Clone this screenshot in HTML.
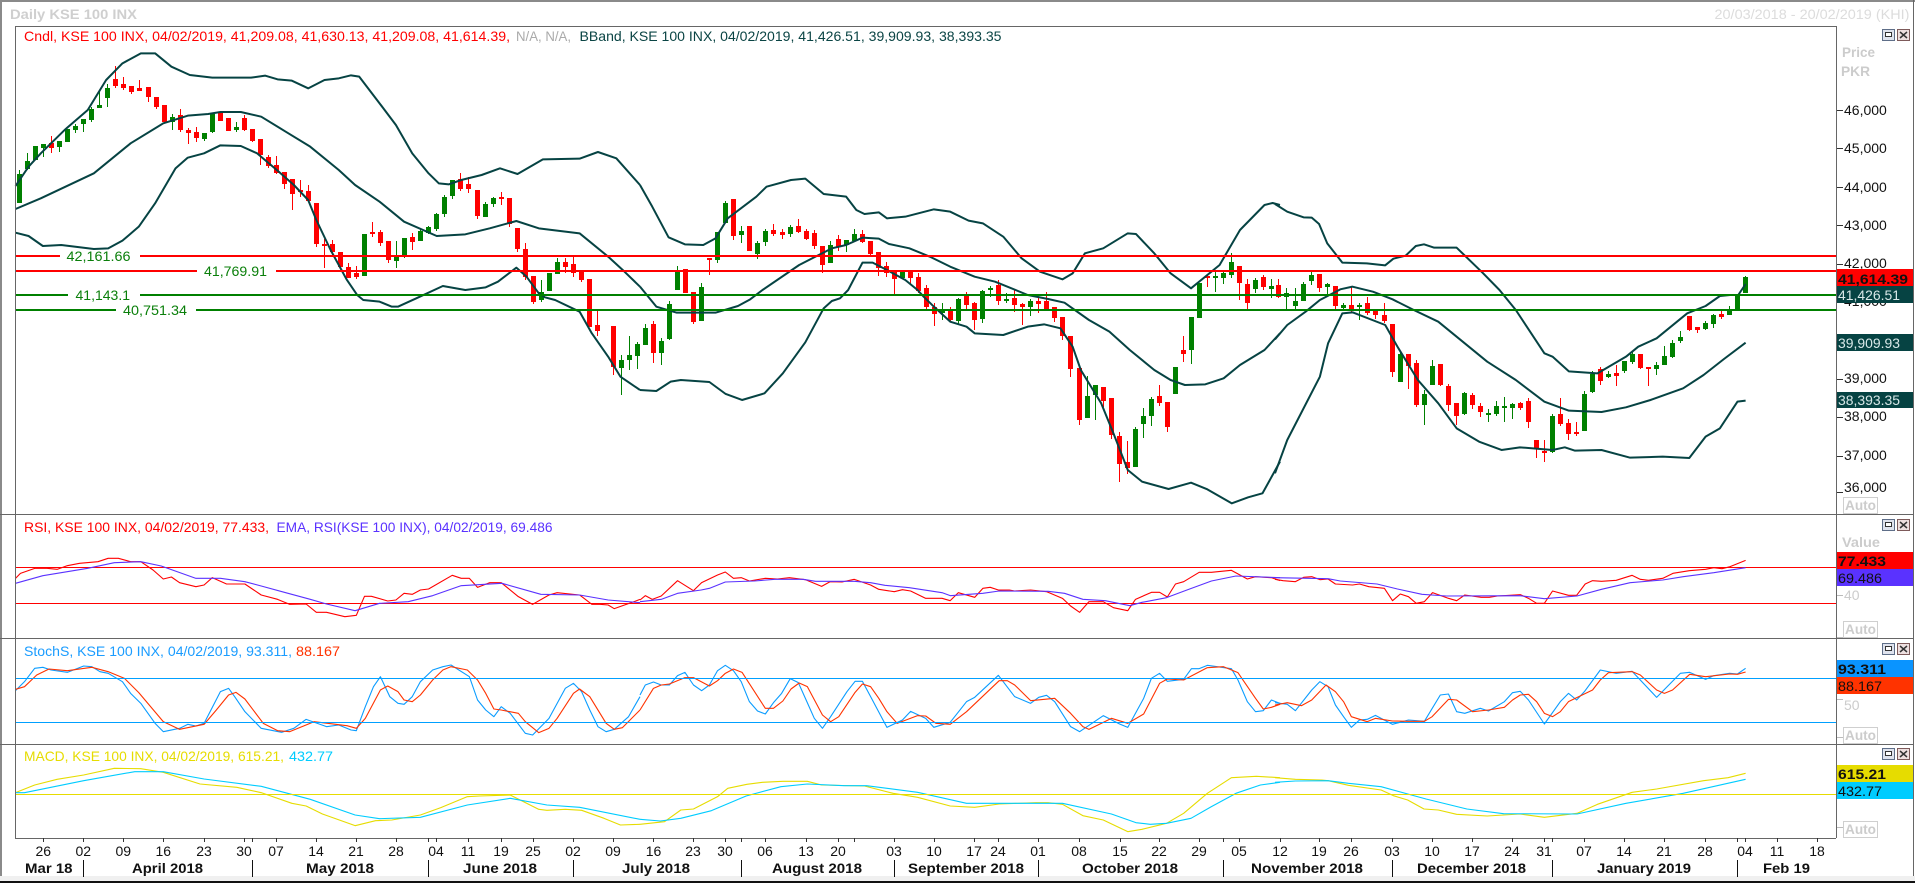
<!DOCTYPE html>
<html><head><meta charset="utf-8"><title>Daily KSE 100 INX</title>
<style>
html,body{margin:0;padding:0;background:#fff;overflow:hidden}
svg{display:block;font-family:"Liberation Sans",sans-serif;font-size:14px}
.v path{vector-effect:non-scaling-stroke;fill:none;stroke-linejoin:round}
.c{fill:none;shape-rendering:crispEdges}
.b{font-weight:bold}
</style></head><body>
<svg width="1915" height="883" viewBox="0 0 1915 883" xmlns="http://www.w3.org/2000/svg">
<rect width="1915" height="883" fill="#fff"/>

<!-- candles -->
<path class="c" stroke="#008000" stroke-width="1" d="M19.5 170V203M27.5 153V170M35.5 146V160M43.5 144V157M59.5 141V152M67.5 129V142M75.5 124V133M83.5 119V132M91.5 107V122M99.5 92V108M107.5 84V107M172.5 114V130M204.5 133V141M212.5 114V133M236.5 122V132M364.5 234V276M396.5 241V268M404.5 238V258M420.5 228V241M428.5 226V234M436.5 213V231M444.5 195V217M452.5 180V199M485.5 202V217M493.5 197V207M541.5 280V302M549.5 273V291M557.5 258V274M621.5 355V395M629.5 336V370M637.5 342V369M645.5 324V345M661.5 338V365M669.5 301V340M677.5 266V290M701.5 283V321M717.5 232V263M725.5 201V223M741.5 226V243M757.5 241V259M765.5 229V246M790.5 225V237M830.5 241V263M846.5 240V252M854.5 229V241M902.5 270V278M942.5 303V320M958.5 298V325M982.5 290V323M990.5 286V297M1006.5 293V303M1030.5 299V316M1087.5 376V418M1095.5 385V420M1135.5 427V467M1143.5 408V438M1151.5 397V426M1175.5 367V394M1191.5 317V364M1199.5 283V318M1215.5 272V292M1223.5 270V284M1231.5 253V278M1255.5 278V293M1271.5 279V298M1286.5 288V309M1295.5 288V309M1303.5 282V301M1311.5 272V285M1327.5 283V295M1343.5 303V311M1359.5 303V320M1400.5 351V382M1424.5 390V425M1432.5 360V385M1464.5 392V415M1488.5 409V422M1496.5 401V416M1504.5 397V422M1512.5 403V419M1552.5 414V453M1584.5 391V431M1592.5 371V393M1608.5 371V378M1624.5 361V373M1632.5 351V364M1656.5 362V375M1664.5 346V365M1672.5 340V358M1680.5 331V343M1705.5 321V330M1713.5 314V328M1729.5 306V315M1745.5 276V293"/>
<path class="c" stroke="#008000" stroke-width="5" d="M19.5 174V203M27.5 161V169M35.5 146V160M43.5 144V148M59.5 141V147M67.5 129V142M75.5 126V130M83.5 119V124M91.5 109V120M99.5 105V108M107.5 88V98M172.5 117V122M204.5 133V139M212.5 114V132M236.5 127V130M364.5 234V276M396.5 257V261M404.5 238V257M420.5 231V241M428.5 227V233M436.5 214V229M444.5 197V214M452.5 180V196M485.5 204V217M493.5 198V204M541.5 292V300M549.5 273V291M557.5 262V274M621.5 360V368M629.5 355V360M637.5 344V356M645.5 328V345M661.5 341V353M669.5 304V339M677.5 271V290M701.5 287V321M717.5 232V260M725.5 203V223M741.5 231V235M757.5 243V254M765.5 231V242M790.5 227V234M830.5 245V263M846.5 240V245M854.5 234V241M902.5 271V278M942.5 311V313M958.5 299V321M982.5 291V319M990.5 288V290M1006.5 299V301M1030.5 301V307M1087.5 396V418M1095.5 385V395M1135.5 429V467M1143.5 416V424M1151.5 399V416M1175.5 367V394M1191.5 317V350M1199.5 283V318M1215.5 276V278M1223.5 273V278M1231.5 262V275M1255.5 280V289M1271.5 286V289M1286.5 293V297M1295.5 301V306M1303.5 284V301M1311.5 275V281M1327.5 284V287M1343.5 305V308M1359.5 305V307M1400.5 354V382M1424.5 394V405M1432.5 366V385M1464.5 393V414M1488.5 413V415M1496.5 406V414M1504.5 406V408M1512.5 404V408M1552.5 416V452M1584.5 394V431M1592.5 374V392M1608.5 374V377M1624.5 361V371M1632.5 354V362M1656.5 365V369M1664.5 356V365M1672.5 343V357M1680.5 337V341M1705.5 323V329M1713.5 315V324M1729.5 309V315M1737.5 295V310M1745.5 277V293"/>
<path class="c" stroke="#ff0000" stroke-width="1" d="M51.5 136V153M115.5 66V88M123.5 77V90M131.5 86V94M139.5 80V91M148.5 87V102M156.5 97V109M180.5 109V132M188.5 128V144M196.5 127V142M244.5 115V131M252.5 129V142M260.5 139V165M268.5 155V168M276.5 156V174M284.5 172V189M292.5 179V210M300.5 180V197M308.5 185V202M316.5 203V247M324.5 239V268M332.5 240V255M340.5 252V269M348.5 263V278M356.5 266V279M372.5 222V237M380.5 230V246M388.5 241V263M412.5 233V250M460.5 173V191M468.5 177V193M477.5 190V219M501.5 192V205M509.5 198V227M517.5 228V252M525.5 243V280M533.5 276V304M565.5 258V273M573.5 257V277M581.5 271V282M597.5 311V336M613.5 326V375M653.5 321V363M693.5 292V324M709.5 258V275M733.5 199V240M773.5 224V236M782.5 229V239M798.5 219V233M806.5 229V240M814.5 230V249M822.5 246V273M838.5 235V251M862.5 230V243M870.5 241V256M878.5 252V276M886.5 262V277M894.5 271V294M910.5 271V285M918.5 273V293M926.5 285V309M934.5 303V326M950.5 307V322M966.5 292V309M974.5 302V330M998.5 280V305M1014.5 290V312M1022.5 303V325M1038.5 297V313M1046.5 292V310M1054.5 307V322M1062.5 317V340M1070.5 336V377M1079.5 368V425M1103.5 387V407M1111.5 398V439M1119.5 432V482M1127.5 441V474M1159.5 385V406M1167.5 402V432M1183.5 336V362M1207.5 275V287M1239.5 266V300M1247.5 279V309M1263.5 275V290M1278.5 279V298M1319.5 274V292M1335.5 286V309M1351.5 287V313M1367.5 297V315M1375.5 311V319M1384.5 303V323M1392.5 324V377M1408.5 354V389M1416.5 360V407M1440.5 364V386M1448.5 384V411M1456.5 403V425M1472.5 393V409M1480.5 403V417M1520.5 402V410M1528.5 398V428M1536.5 440V458M1544.5 440V462M1560.5 398V426M1568.5 419V440M1576.5 422V436M1600.5 367V385M1616.5 365V386M1640.5 354V369M1648.5 367V386M1689.5 316V331M1697.5 327V333M1721.5 311V319"/>
<path class="c" stroke="#ff0000" stroke-width="5" d="M51.5 143V148M115.5 79V86M123.5 84V88M131.5 86V92M139.5 88V91M148.5 87V97M156.5 97V107M164.5 105V122M180.5 115V130M188.5 130V133M196.5 132V138M220.5 113V121M228.5 118V131M244.5 118V130M252.5 129V141M260.5 139V155M268.5 157V166M276.5 165V173M284.5 172V184M292.5 179V194M300.5 190V192M308.5 191V201M316.5 203V244M324.5 244V246M332.5 244V252M340.5 252V267M348.5 267V278M356.5 273V277M372.5 232V234M380.5 232V243M388.5 241V260M412.5 237V242M460.5 179V189M468.5 184V189M477.5 190V216M501.5 197V199M509.5 198V224M517.5 228V249M525.5 249V277M533.5 276V302M565.5 262V267M573.5 264V273M581.5 271V280M589.5 279V327M597.5 325V331M613.5 326V367M653.5 324V353M685.5 269V293M693.5 292V322M709.5 258V260M733.5 199V236M749.5 226V251M773.5 230V234M782.5 232V235M798.5 226V232M806.5 231V239M814.5 233V246M822.5 246V265M838.5 239V247M862.5 234V242M870.5 241V254M878.5 252V268M886.5 266V273M894.5 271V279M910.5 271V278M918.5 277V291M926.5 288V307M934.5 307V314M950.5 311V320M966.5 295V305M974.5 303V320M998.5 285V301M1014.5 298V305M1022.5 304V307M1038.5 301V304M1046.5 301V309M1054.5 307V318M1062.5 317V336M1070.5 336V369M1079.5 368V420M1103.5 387V401M1111.5 398V435M1119.5 436V464M1127.5 462V468M1159.5 396V403M1167.5 402V427M1183.5 350V354M1207.5 276V278M1239.5 266V283M1247.5 284V303M1263.5 277V287M1278.5 285V297M1319.5 274V288M1335.5 286V306M1351.5 305V309M1367.5 303V313M1375.5 311V315M1384.5 315V321M1392.5 324V372M1408.5 354V366M1416.5 363V405M1440.5 364V385M1448.5 386V405M1456.5 403V416M1472.5 395V405M1480.5 406V412M1520.5 403V408M1528.5 401V422M1536.5 440V449M1544.5 451V453M1560.5 414V424M1568.5 423V434M1576.5 432V434M1600.5 369V381M1616.5 373V376M1640.5 354V368M1648.5 367V369M1689.5 316V330M1697.5 327V330M1721.5 314V317"/>

<!-- Bollinger bands -->
<g class="v" stroke="#064343" stroke-width="2">
<g transform="scale(.40816 .33333)">
<path d="M38 558 70 500 100 460 160 388 215 330 260 240 300 190 345 160 380 160 420 200 465 225 520 233 615 233 650 227 680 238 715 242 755 265 795 240 830 235 860 226 880 230 930 310 970 375 1010 460 1050 520 1075 550 1100 553 1130 540 1180 525 1225 505 1268 522 1330 478 1420 476 1465 456 1510 475 1568 555"/>
<path d="M38 627 100 595 230 520 320 430 400 370 460 347 510 342 540 336 590 336 640 350 700 395 760 440 830 510 870 555 930 605 990 665 1070 708 1140 703 1200 685 1265 663 1320 685 1420 700 1490 770 1530 815 1568 860"/>
<path d="M38 698 70 708 105 738 150 735 230 747 265 745 300 722 340 680 380 610 430 505 460 473 500 460 540 436 590 438 630 460 680 512 720 555 755 600 775 660 810 750 850 840 875 885 890 900 930 905 960 920 975 920 1020 895 1085 858 1140 870 1190 862 1220 845 1265 803 1290 830 1320 880 1335 892 1360 900 1420 935 1450 1000 1490 1070 1520 1130 1568 1170"/>
</g>
<g transform="translate(640 0) scale(.40816 .33333)">
<path d="M0 555 30 620 70 712 110 733 155 735 185 715 215 655 285 590 310 560 370 540 405 536 450 582 505 590 530 630 550 642 585 637 605 655 650 650 720 628 760 635 805 662 840 670 890 710 935 775 980 815 1035 838 1060 820 1090 760 1135 745 1195 700 1215 702 1260 760 1300 820 1350 865 1420 795 1470 690 1530 615 1550 609 1568 615"/>
<path d="M0 860 40 920 90 938 185 938 240 918 270 898 300 870 390 795 430 770 470 745 505 735 545 713 585 716 610 732 660 745 710 770 760 800 820 830 870 845 950 885 1000 897 1040 908 1100 960 1150 995 1200 1050 1260 1110 1300 1140 1335 1155 1385 1153 1430 1135 1470 1095 1530 1050 1568 1000"/>
<path d="M0 1170 40 1173 75 1145 100 1140 170 1146 210 1182 250 1200 305 1180 350 1120 405 1027 450 925 470 903 490 895 510 870 545 788 570 788 605 810 650 840 680 870 695 890 720 920 760 965 800 980 820 1000 890 1005 950 980 990 973 1030 985 1060 1040 1080 1110 1130 1210 1160 1300 1195 1410 1230 1445 1295 1467 1350 1448 1390 1468 1450 1510 1490 1492 1525 1480 1568 1385"/>
</g>
<g transform="translate(1275 0) scale(.40816 .33333)">
<path d="M0 612 30 635 70 652 90 653 108 672 128 730 165 788 225 790 270 796 290 776 320 767 345 738 365 733 390 743 445 743 510 820 550 870 590 930 660 1060 680 1070 720 1114 790 1120 860 1070 890 1040 935 1015 1010 940 1055 918 1090 888 1115 885 1135 885 1153 852"/>
<path d="M0 1018 30 975 75 935 110 900 160 868 190 860 240 875 288 898 340 930 400 965 460 1025 520 1085 590 1140 660 1205 720 1232 800 1236 860 1222 920 1200 1000 1165 1050 1125 1100 1077 1153 1028"/>
<path d="M0 1420 30 1320 110 1130 130 1030 165 940 190 937 270 975 300 1040 350 1140 400 1210 445 1285 500 1325 555 1350 600 1342 680 1350 710 1342 735 1352 800 1350 870 1373 950 1370 1015 1374 1055 1310 1090 1285 1133 1205 1153 1202"/>
</g>
</g>

<!-- levels -->
<g class="c" stroke-width="2">
<path stroke="#ff0000" d="M16 256H60M140 256H1836M16 271H197M276 271H1836"/>
<path stroke="#008000" d="M16 295H68M140 295H1836M16 310H116M196 310H1836"/>
</g>
<g fill="#0a7f0a">
<text x="66.5" y="261" textLength="64" lengthAdjust="spacingAndGlyphs">42,161.66</text>
<text x="204" y="276" textLength="63" lengthAdjust="spacingAndGlyphs">41,769.91</text>
<text x="75.5" y="300" textLength="54.5" lengthAdjust="spacingAndGlyphs">41,143.1</text>
<text x="123" y="315" textLength="64" lengthAdjust="spacingAndGlyphs">40,751.34</text>
</g>

<!-- RSI -->
<path class="c" stroke="#ff0000" d="M16 567.5H1836M16 603.5H1836"/>
<g class="v" stroke-width="1.1">
<g transform="translate(0 510) scale(.40816 .33333)">
<path stroke="#ff0000" d="M38 205 50 190 85 175 115 175 140 178 165 167 195 160 240 155 265 145 290 145 320 155 345 155 375 180 400 207 420 201 440 218 480 230 500 225 520 203 555 222 600 222 640 255 680 268 710 283 750 282 775 307 800 307 845 320 873 316 893 259 910 259 950 273 970 270 990 250 1010 253 1030 240 1050 237 1108 196 1130 205 1150 205 1170 232 1200 218 1228 218 1270 260 1305 283 1345 255 1365 248 1420 255 1450 283 1470 283 1490 285 1505 296 1560 272 1568 268"/>
<path stroke="#5a32ff" d="M38 220 105 197 215 175 280 158 345 155 395 168 480 205 540 205 600 215 640 228 700 248 760 268 800 282 870 302 930 280 1000 275 1060 257 1130 227 1230 220 1325 253 1420 255 1490 270 1568 278"/>
<path stroke="#0a9cff" d="M38 542 60 515 85 475 105 472 125 480 165 487 205 468 225 470 245 485 265 490 300 515 320 550 345 580 380 640 400 665 440 655 460 643 480 648 500 640 540 545 560 535 575 560 600 605 640 655 690 667 720 655 750 628 800 650 830 645 860 660 873 662 895 590 915 530 932 500 955 560 975 580 990 583 1010 560 1030 515 1060 480 1085 470 1105 465 1150 500 1170 570 1190 600 1210 620 1228 590 1250 610 1287 670 1305 675 1345 625 1385 535 1405 520 1425 545 1445 600 1465 650 1485 665 1505 658 1540 620 1568 560"/>
<path stroke="#ff3300" d="M38 538 60 530 90 495 120 477 165 482 225 472 265 485 305 505 340 548 400 635 440 658 500 643 530 600 560 555 578 547 600 567 645 640 680 662 710 665 770 635 850 647 873 655 895 625 932 540 950 528 975 545 990 570 1010 575 1030 555 1060 510 1085 480 1105 470 1145 480 1170 510 1190 550 1210 597 1228 600 1270 610 1287 635 1320 668 1345 655 1365 625 1405 550 1420 537 1445 560 1485 640 1505 658 1525 653 1568 600"/>
<path stroke="#e6dc00" d="M38 848 85 825 140 808 205 795 280 775 345 776 400 787 490 822 580 832 640 848 715 880 750 888 790 912 870 947 920 932 960 930 1030 915 1080 893 1145 860 1175 858 1250 855 1320 898 1340 901 1385 898 1425 901 1480 925 1520 945 1568 943"/>
<path stroke="#00ccff" d="M38 848 60 848 205 812 330 785 400 785 500 807 640 829 760 868 870 915 930 926 1030 922 1145 885 1250 865 1340 885 1420 892 1568 928"/>
</g>
<g transform="translate(640 510) scale(.40816 .33333)">
<path stroke="#ff0000" d="M0 270 13 257 30 268 52 258 92 212 131 242 151 218 190 195 209 186 229 205 248 203 268 213 307 205 337 207 366 203 405 209 445 229 466 215 495 216 525 208 565 225 585 238 623 245 643 239 663 243 700 265 740 265 760 272 780 248 820 262 840 235 858 232 878 240 905 240 918 243 957 240 996 245 1035 265 1055 288 1077 307 1100 275 1135 275 1160 293 1195 302 1214 268 1253 247 1273 247 1292 261 1312 222 1332 215 1370 187 1400 187 1449 181 1488 207 1508 200 1547 203 1568 212"/>
<path stroke="#5a32ff" d="M0 275 52 268 92 250 150 240 170 235 209 216 280 213 330 208 400 208 430 214 525 214 565 218 600 226 660 233 740 248 760 257 840 250 880 243 1000 244 1040 250 1085 268 1140 272 1200 287 1230 277 1290 263 1340 240 1400 213 1460 198 1568 203"/>
<path stroke="#0a9cff" d="M0 555 13 525 33 516 52 525 72 525 92 497 110 487 131 525 151 542 170 525 190 482 209 466 229 482 248 515 268 575 288 603 307 612 327 578 347 550 368 506 388 518 407 570 427 625 447 655 467 620 507 545 527 514 545 514 565 560 605 652 643 630 663 604 700 625 720 652 760 637 800 575 820 562 878 496 918 560 957 580 977 562 996 556 1016 575 1055 650 1077 665 1135 617 1175 642 1195 652 1234 565 1253 505 1273 490 1292 514 1332 508 1351 476 1370 476 1390 466 1449 476 1465 510 1488 575 1508 605 1527 602 1547 570 1568 580"/>
<path stroke="#ff3300" d="M0 600 33 535 52 525 72 522 110 503 131 503 170 528 190 512 209 490 229 477 250 487 307 595 327 595 350 573 370 537 390 519 410 530 447 615 467 635 487 620 527 547 545 522 565 530 585 565 605 605 630 640 680 617 700 618 725 640 760 643 800 605 880 512 900 512 918 525 957 572 1016 565 1055 610 1085 650 1100 658 1155 625 1195 640 1234 612 1273 520 1292 507 1332 510 1390 473 1429 470 1465 488 1508 565 1527 597 1547 592 1568 583"/>
<path stroke="#e6dc00" d="M0 943 60 935 100 900 131 897 190 860 215 835 262 823 300 817 350 814 410 814 445 825 550 828 620 850 680 862 760 888 820 892 880 882 970 878 1000 878 1035 883 1085 917 1135 930 1195 965 1230 958 1290 940 1332 910 1390 850 1449 803 1510 799 1568 803"/>
<path stroke="#00ccff" d="M0 928 50 933 100 925 175 902 260 858 345 830 410 822 500 827 555 827 680 847 800 880 1035 880 1155 912 1215 938 1250 943 1290 940 1350 925 1400 890 1460 850 1520 825 1568 817"/>
</g>
<g transform="translate(1275 510) scale(.40816 .33333)">
<path stroke="#ff0000" d="M0 208 20 212 50 215 70 202 90 200 110 209 130 207 148 222 190 225 207 222 230 230 268 235 288 272 307 252 327 260 346 280 366 275 386 248 425 265 445 272 465 255 505 262 525 262 545 258 601 254 621 265 641 280 660 280 680 243 719 256 739 256 760 222 778 212 800 214 836 211 875 196 895 208 915 211 950 205 975 190 1015 182 1055 178 1075 173 1095 176 1115 170 1153 151"/>
<path stroke="#5a32ff" d="M0 203 130 206 160 213 250 222 300 237 360 253 420 258 600 257 660 266 740 258 800 238 870 218 950 210 1000 200 1075 188 1153 173"/>
<path stroke="#0a9cff" d="M0 578 30 583 50 602 90 540 110 515 130 530 148 585 168 620 187 652 207 630 226 628 246 616 288 643 327 630 366 634 405 555 425 552 445 605 465 610 503 595 523 603 562 575 582 548 601 544 621 570 660 642 699 575 719 550 739 570 758 545 797 480 836 490 875 484 935 562 993 490 1016 487 1055 508 1075 497 1114 490 1133 492 1153 475"/>
<path stroke="#ff3300" d="M0 585 30 578 65 587 90 570 125 525 148 545 168 575 187 620 226 635 246 625 288 633 327 634 366 634 385 620 425 568 445 570 484 605 523 600 562 592 582 570 601 555 621 553 641 575 660 610 680 620 699 605 719 575 778 540 797 510 817 488 875 485 895 495 935 540 954 550 974 540 1016 493 1055 500 1114 492 1133 493 1153 486"/>
<path stroke="#e6dc00" d="M0 803 50 808 115 810 130 812 180 826 260 840 290 857 325 870 365 897 400 900 445 913 520 918 600 912 660 922 740 910 790 883 875 847 935 837 1050 812 1110 803 1153 790"/>
<path stroke="#00ccff" d="M0 817 50 813 130 812 180 820 260 830 370 867 470 897 560 911 740 912 860 880 1000 850 1153 808"/>
</g>
</g>
<path class="c" stroke="#00a0ff" d="M16 678.5H1836M16 722.5H1836"/>
<path class="c" stroke="#e6dc00" d="M16 794.5H1836"/>

<!-- frame -->
<g class="c" stroke="#666">
<path stroke="#8a8a8a" stroke-width="2" d="M1 0V876M0 1H1915"/>
<path d="M15.5 26V838M1836.5 26V838M15.5 26.5H1836.5M0 514.5H1913M0 638.5H1913M0 744.5H1913M15 838.5H1836M1913.5 0V881"/>
</g>
<rect x="0" y="876" width="1915" height="5" fill="#f0f0f0"/>
<rect x="0" y="881" width="1915" height="2" fill="#111"/>

<!-- titles -->
<text class="b" x="10" y="19" fill="#cfcfcf" textLength="127" lengthAdjust="spacingAndGlyphs">Daily KSE 100 INX</text>
<text x="1714.5" y="19" fill="#dcdcdc" textLength="195" lengthAdjust="spacingAndGlyphs">20/03/2018 - 20/02/2019 (KHI)</text>

<text x="24" y="41" fill="#ff0000" textLength="486" lengthAdjust="spacingAndGlyphs">Cndl, KSE 100 INX, 04/02/2019, 41,209.08, 41,630.13, 41,209.08, 41,614.39,</text>
<text x="516" y="41" fill="#aaaaaa" textLength="55" lengthAdjust="spacingAndGlyphs">N/A, N/A,</text>
<text x="579.5" y="41" fill="#0a4444" textLength="422" lengthAdjust="spacingAndGlyphs">BBand, KSE 100 INX, 04/02/2019, 41,426.51, 39,909.93, 38,393.35</text>

<text x="24" y="532" fill="#ff0000" textLength="245" lengthAdjust="spacingAndGlyphs">RSI, KSE 100 INX, 04/02/2019, 77.433,</text>
<text x="276.5" y="532" fill="#5a32ff" textLength="276" lengthAdjust="spacingAndGlyphs">EMA, RSI(KSE 100 INX), 04/02/2019, 69.486</text>
<text x="24" y="656" fill="#1a9cff" textLength="268" lengthAdjust="spacingAndGlyphs">StochS, KSE 100 INX, 04/02/2019, 93.311,</text>
<text x="296" y="656" fill="#ff3300" textLength="44" lengthAdjust="spacingAndGlyphs">88.167</text>
<text x="24" y="761" fill="#e6dc00" textLength="260" lengthAdjust="spacingAndGlyphs">MACD, KSE 100 INX, 04/02/2019, 615.21,</text>
<text x="289" y="761" fill="#00ccff" textLength="44" lengthAdjust="spacingAndGlyphs">432.77</text>

<!-- right axis -->
<g class="b" fill="#cccccc">
<text x="1842" y="57" textLength="33" lengthAdjust="spacingAndGlyphs">Price</text>
<text x="1841" y="76" textLength="29" lengthAdjust="spacingAndGlyphs">PKR</text>
<text x="1842" y="547" textLength="38" lengthAdjust="spacingAndGlyphs">Value</text>
</g>
<path class="c" stroke="#333" d="M1837 110.500H1843M1837 148.500H1843M1837 187.500H1843M1837 225.500H1843M1837 264.500H1843M1837 379.500H1843M1837 417.500H1843M1837 456.500H1843M1837 492.500H1843"/>
<path class="c" stroke="#bbb" d="M1837 595.500H1843M1837 637.500H1843M1837 699.500H1843M1837 737.500H1843M1837 827.500H1843"/>
<g fill="#111">
<text x="1844" y="115">46,000</text><text x="1844" y="153">45,000</text><text x="1844" y="192">44,000</text><text x="1844" y="230">43,000</text><text x="1844" y="268">42,000</text><text x="1844" y="306">41,000</text><text x="1844" y="383">39,000</text><text x="1844" y="421">38,000</text><text x="1844" y="460">37,000</text><text x="1844" y="492">36,000</text>
</g>
<text x="1844" y="600" fill="#cccccc">40</text>
<text x="1844" y="710" fill="#cccccc">50</text>

<rect x="1837" y="269" width="76" height="17" fill="#ff0000"/>
<rect x="1837" y="286" width="76" height="17" fill="#064343"/>
<rect x="1837" y="334" width="76" height="17" fill="#064343"/>
<rect x="1837" y="392" width="76" height="16" fill="#064343"/>
<text class="b" x="1838" y="284" fill="#111" textLength="70" lengthAdjust="spacingAndGlyphs">41,614.39</text>
<text x="1838" y="300" fill="#d8e8e8" textLength="62" lengthAdjust="spacingAndGlyphs">41,426.51</text>
<text x="1838" y="348" fill="#d8e8e8" textLength="62" lengthAdjust="spacingAndGlyphs">39,909.93</text>
<text x="1838" y="405" fill="#d8e8e8" textLength="62" lengthAdjust="spacingAndGlyphs">38,393.35</text>

<rect x="1837" y="552" width="76" height="17" fill="#ff0000"/>
<rect x="1837" y="569" width="76" height="17" fill="#5a32ff"/>
<text class="b" x="1838" y="566" fill="#111" textLength="48" lengthAdjust="spacingAndGlyphs">77.433</text>
<text x="1838" y="583" fill="#111" textLength="44" lengthAdjust="spacingAndGlyphs">69.486</text>

<rect x="1837" y="660" width="76" height="17" fill="#0a94ff"/>
<rect x="1837" y="677" width="76" height="17" fill="#ff3300"/>
<text class="b" x="1838" y="674" fill="#111" textLength="48" lengthAdjust="spacingAndGlyphs">93.311</text>
<text x="1838" y="691" fill="#111" textLength="44" lengthAdjust="spacingAndGlyphs">88.167</text>

<rect x="1837" y="765" width="76" height="17" fill="#e6dc00"/>
<rect x="1837" y="782" width="76" height="17" fill="#00ccff"/>
<text class="b" x="1838" y="779" fill="#111" textLength="48" lengthAdjust="spacingAndGlyphs">615.21</text>
<text x="1838" y="796" fill="#111" textLength="44" lengthAdjust="spacingAndGlyphs">432.77</text>

<!-- Auto buttons -->
<g fill="#fff" stroke="#cfcfcf" class="c">
<rect x="1843.500" y="497.500" width="34" height="16"/>
<rect x="1843.500" y="621.500" width="34" height="16"/>
<rect x="1843.500" y="727.500" width="34" height="16"/>
<rect x="1843.500" y="821.500" width="34" height="16"/>
</g>
<g class="b" fill="#cccccc">
<text x="1845" y="510" textLength="31" lengthAdjust="spacingAndGlyphs">Auto</text>
<text x="1845" y="634" textLength="31" lengthAdjust="spacingAndGlyphs">Auto</text>
<text x="1845" y="740" textLength="31" lengthAdjust="spacingAndGlyphs">Auto</text>
<text x="1845" y="834" textLength="31" lengthAdjust="spacingAndGlyphs">Auto</text>
</g>

<!-- pane buttons -->
<defs>
<g id="btn">
<rect x="1882.500" y=".5" width="12" height="11" fill="#dfe3ee" stroke="#5e6e88" shape-rendering="crispEdges"/>
<rect x="1885.500" y="3.500" width="6" height="4" fill="#fff" stroke="#333" shape-rendering="crispEdges"/>
<rect x="1897.500" y=".5" width="12" height="11" fill="#eee0e0" stroke="#7d5a5a" shape-rendering="crispEdges"/>
<path d="M1900 3 1907 9M1907 3 1900 9" stroke="#333" stroke-width="1.500" fill="none"/>
</g>
</defs>
<use href="#btn" y="29"/>
<use href="#btn" y="519"/>
<use href="#btn" y="643"/>
<use href="#btn" y="748"/>

<!-- time axis -->
<path class="c" stroke="#333" d="M43.5 838v4M83.5 838v4M123.5 838v4M163.5 838v4M204.5 838v4M244.5 838v4M252.5 838v4M276.5 838v4M316.5 838v4M356.5 838v4M396.5 838v4M428.5 838v4M436.5 838v4M468.5 838v4M501.5 838v4M533.5 838v4M573.5 838v4M613.5 838v4M653.5 838v4M693.5 838v4M725.5 838v4M741.500 838v4M765.500 838v4M806.500 838v4M838.500 838v4M854.500 838v4M894.500 838v4M934.500 838v4M974.500 838v4M998.500 838v4M1038.500 838v4M1079.500 838v4M1120.500 838v4M1159.500 838v4M1199.500 838v4M1223.500 838v4M1239.500 838v4M1280.500 838v4M1319.500 838v4M1351.500 838v4M1392.500 838v4M1432.500 838v4M1472.500 838v4M1512.500 838v4M1544.500 838v4M1552.500 838v4M1584.500 838v4M1624.500 838v4M1664.500 838v4M1705.500 838v4M1737.500 838v4M1745.500 838v4M1777.500 838v4M1817.500 838v4"/>
<g fill="#111" text-anchor="middle">
<text x="43.300" y="856">26</text><text x="83.300" y="856">02</text><text x="123.300" y="856">09</text><text x="163.300" y="856">16</text><text x="204" y="856">23</text><text x="244" y="856">30</text><text x="276" y="856">07</text><text x="316" y="856">14</text><text x="356" y="856">21</text><text x="396" y="856">28</text><text x="436" y="856">04</text><text x="468" y="856">11</text><text x="501" y="856">19</text><text x="533" y="856">25</text><text x="573" y="856">02</text><text x="613" y="856">09</text><text x="653.500" y="856">16</text><text x="693" y="856">23</text><text x="725" y="856">30</text><text x="765" y="856">06</text><text x="806" y="856">13</text><text x="838" y="856">20</text><text x="894" y="856">03</text><text x="934" y="856">10</text><text x="974" y="856">17</text><text x="998" y="856">24</text><text x="1038" y="856">01</text><text x="1079" y="856">08</text><text x="1120" y="856">15</text><text x="1159" y="856">22</text><text x="1199" y="856">29</text><text x="1239" y="856">05</text><text x="1280" y="856">12</text><text x="1319" y="856">19</text><text x="1351" y="856">26</text><text x="1392" y="856">03</text><text x="1432" y="856">10</text><text x="1472" y="856">17</text><text x="1512" y="856">24</text><text x="1544" y="856">31</text><text x="1584" y="856">07</text><text x="1624" y="856">14</text><text x="1664" y="856">21</text><text x="1705" y="856">28</text><text x="1745" y="856">04</text><text x="1777" y="856">11</text><text x="1817" y="856">18</text>
</g>
<path class="c" stroke="#111" d="M83.5 860V877M252.5 860V877M428.5 860V877M573.5 860V877M741.5 860V877M894.5 860V877M1038.5 860V877M1223.5 860V877M1392.5 860V877M1552.5 860V877M1737.5 860V877"/>
<g class="b" fill="#111">
<text x="25" y="873" textLength="47.500" lengthAdjust="spacingAndGlyphs">Mar 18</text>
<text x="132" y="873" textLength="71" lengthAdjust="spacingAndGlyphs">April 2018</text>
<text x="306" y="873" textLength="68" lengthAdjust="spacingAndGlyphs">May 2018</text>
<text x="463" y="873" textLength="74" lengthAdjust="spacingAndGlyphs">June 2018</text>
<text x="622" y="873" textLength="68" lengthAdjust="spacingAndGlyphs">July 2018</text>
<text x="772" y="873" textLength="90" lengthAdjust="spacingAndGlyphs">August 2018</text>
<text x="908" y="873" textLength="116" lengthAdjust="spacingAndGlyphs">September 2018</text>
<text x="1082" y="873" textLength="96" lengthAdjust="spacingAndGlyphs">October 2018</text>
<text x="1251" y="873" textLength="112" lengthAdjust="spacingAndGlyphs">November 2018</text>
<text x="1417" y="873" textLength="109" lengthAdjust="spacingAndGlyphs">December 2018</text>
<text x="1597" y="873" textLength="94" lengthAdjust="spacingAndGlyphs">January 2019</text>
<text x="1763" y="873" textLength="47" lengthAdjust="spacingAndGlyphs">Feb 19</text>
</g>
</svg>
</body></html>
